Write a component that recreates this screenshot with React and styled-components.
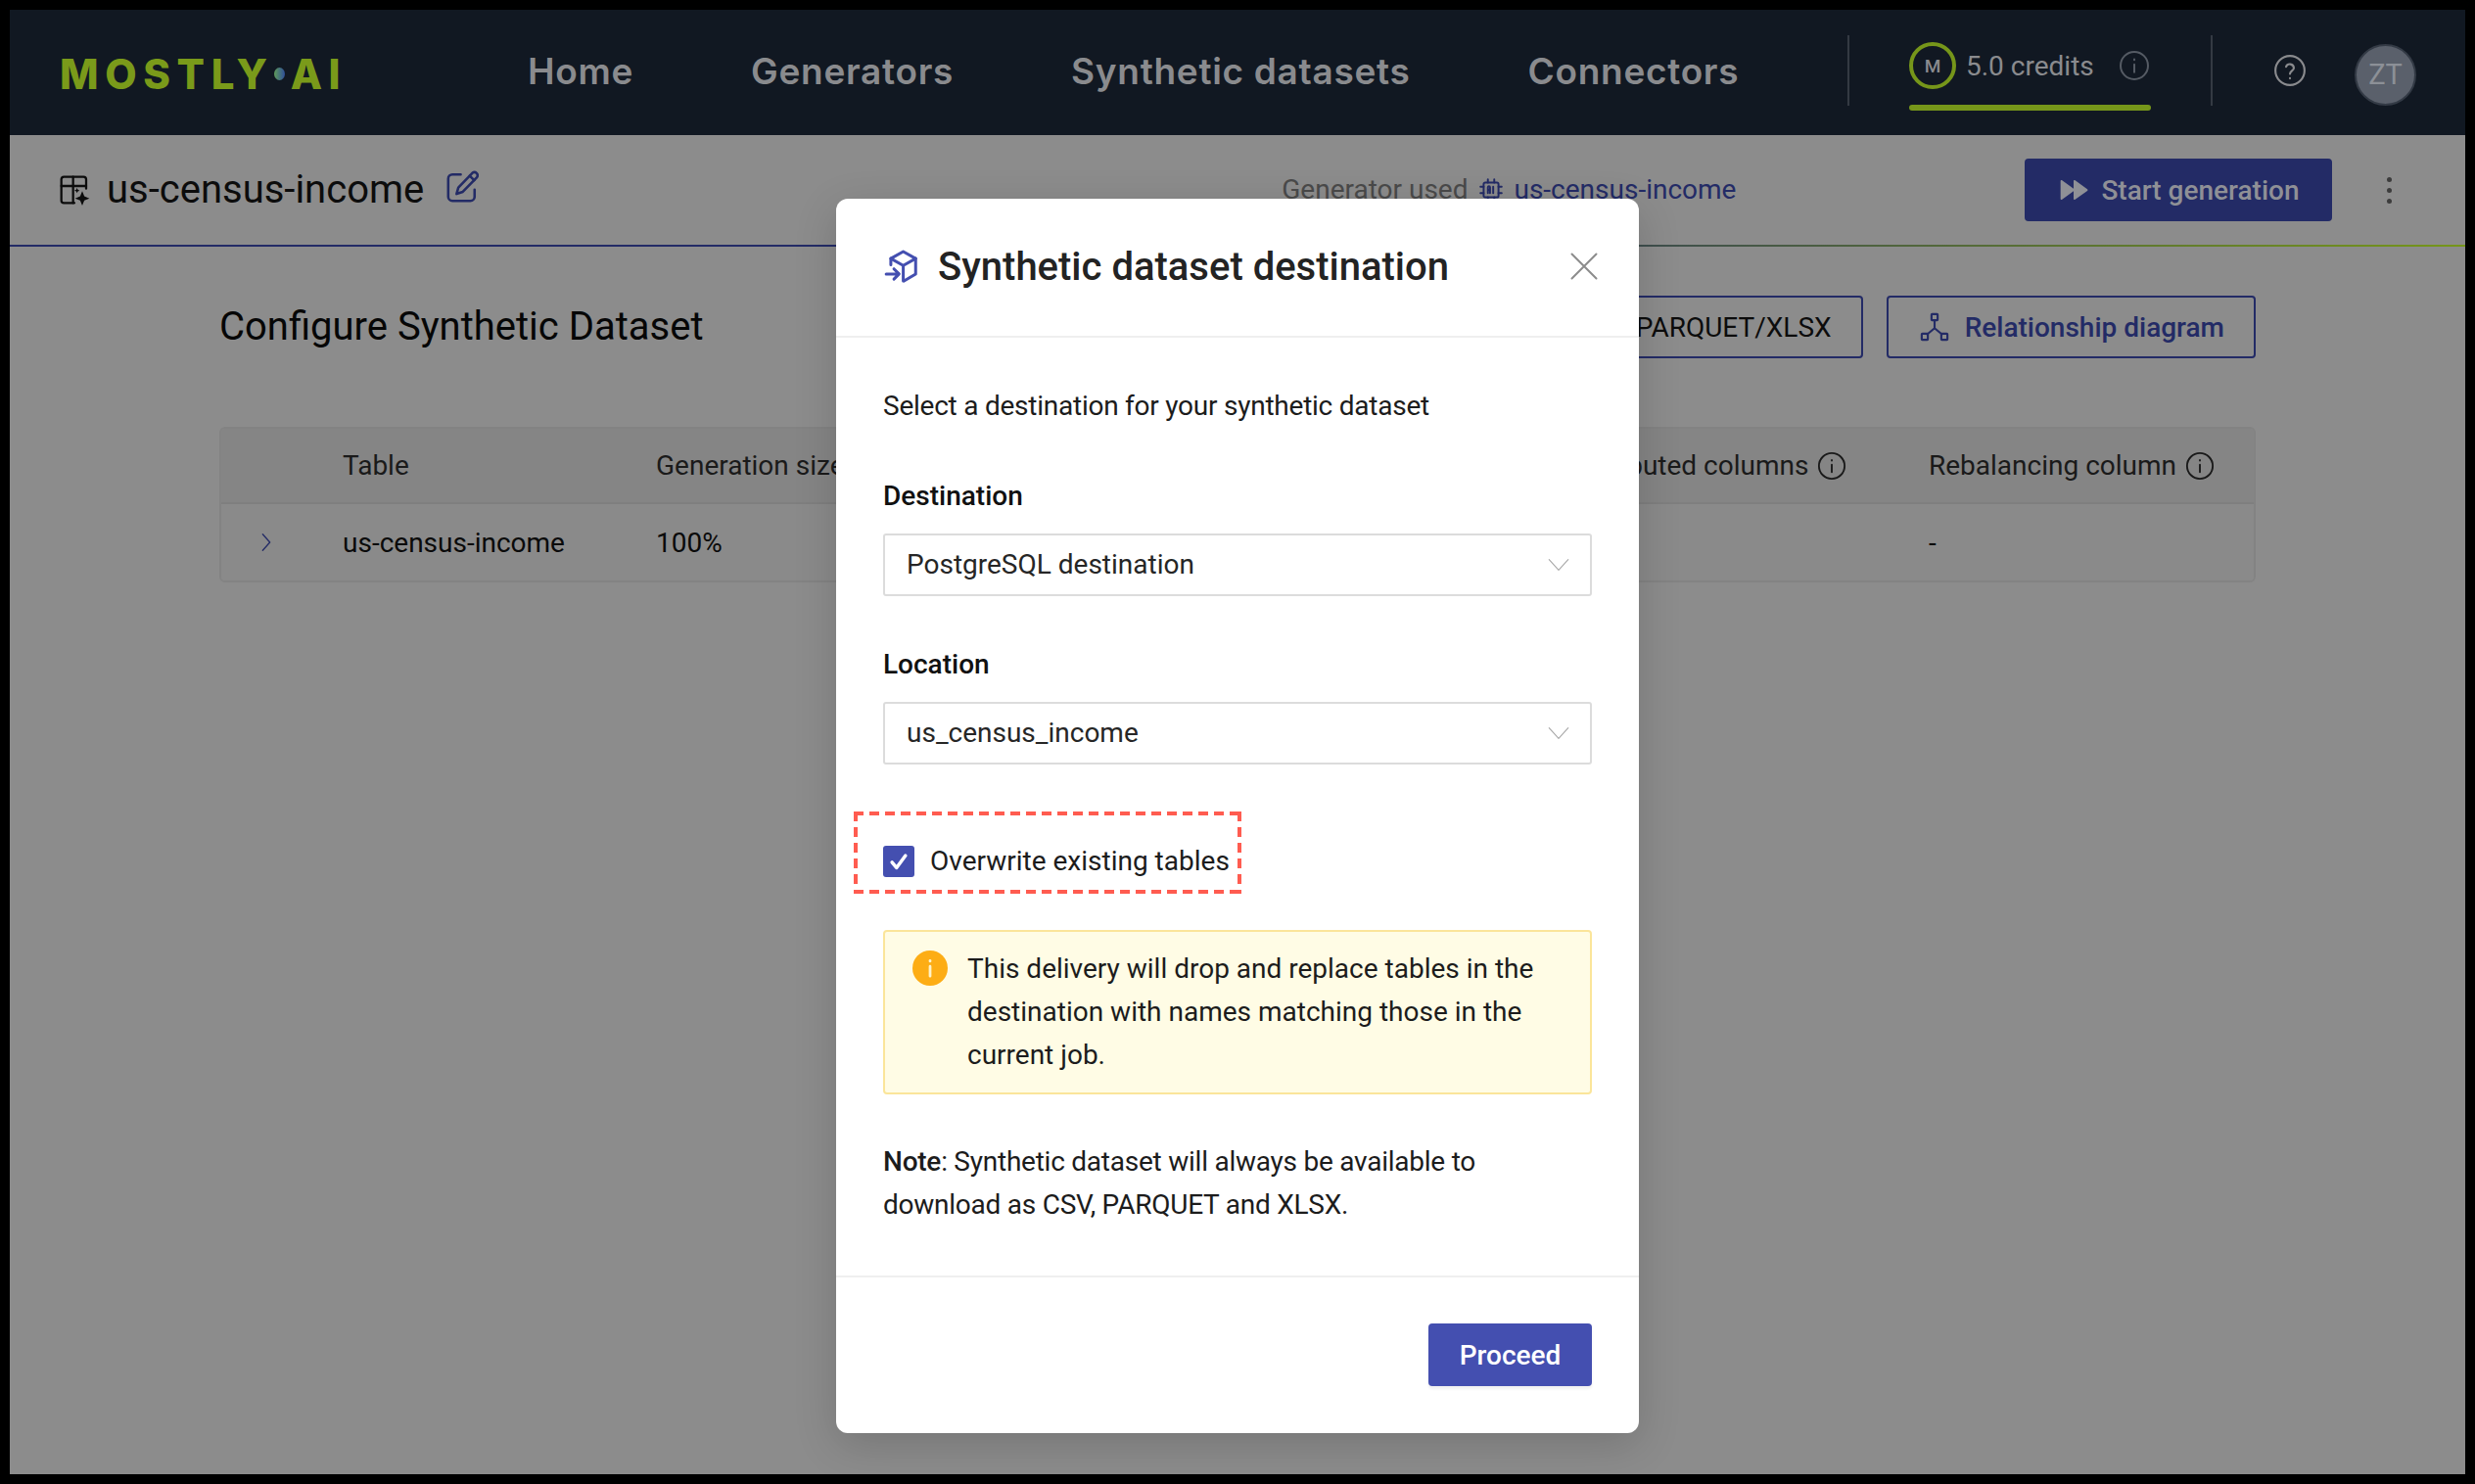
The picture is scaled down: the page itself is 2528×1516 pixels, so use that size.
import React from "react";
import styled, { createGlobalStyle } from "styled-components";

const Global = createGlobalStyle`
  html, body { margin: 0; padding: 0; background: #000; }
  * { box-sizing: border-box; }
  body { font-family: Roboto, "Liberation Sans", sans-serif; }
`;

const Frame = styled.div`
  position: relative;
  width: 2528px;
  height: 1516px;
  border: 10px solid #000;
  background: #8c8c8c;
  overflow: hidden;
`;

const Nav = styled.header`
  height: 128px;
  background: #111822;
  display: flex;
  align-items: center;
  padding: 0 50px 0 52px;
`;

const Logo = styled.div`
  width: 296px;
  margin: 3px 0 0 -1px;
  display: flex;
  align-items: center;
  font-family: Inter, sans-serif;
  font-size: 42px;
  font-weight: 800;
  letter-spacing: 6.6px;
  line-height: 1;
  white-space: nowrap;
  color: #7a9a1a;
`;

const LogoDot = styled.span`
  width: 11px;
  height: 13px;
  margin: 0 6px 0 0;
  flex: none;
  border-radius: 50%;
  background: linear-gradient(90deg, #5f9a5a, #2f4f9a);
`;

const NavLinks = styled.nav`
  display: flex;
  gap: 120px;
  margin-left: 182px;
  margin-top: -4px;
`;

const NavLink = styled.a`
  font-family: Inter, sans-serif;
  font-size: 37px;
  font-weight: 600;
  letter-spacing: 0.7px;
  color: #8a8b8e;
`;

const NavRight = styled.div`
  margin-left: auto;
  display: flex;
  align-items: center;
`;

const VDivider = styled.div`
  width: 2px;
  height: 72px;
  margin-top: -4px;
  background: #343a43;
`;

const Credits = styled.div`
  width: 247px;
  margin: 8px 61px 0;
  display: flex;
  flex-direction: column;
  gap: 16px;
`;

const CreditRow = styled.div`
  display: flex;
  align-items: center;
  color: #8a8b8e;
  font-size: 28px;
  white-space: nowrap;
`;

const CreditBadge = styled.div`
  width: 48px;
  height: 48px;
  border-radius: 50%;
  border: 4px solid #76961a;
  display: flex;
  align-items: center;
  justify-content: center;
  margin-right: 10px;
  font-size: 19px;
  font-weight: 500;
  color: #8a8b8e;
  flex: none;
`;

const CreditInfo = styled.span`
  display: flex;
  margin-left: 25px;
  color: #555b64;
`;

const CreditBar = styled.div`
  height: 6px;
  border-radius: 3px;
  background: #76961a;
`;

const HelpButton = styled.span`
  display: flex;
  margin: -4px 49px 0 62px;
  color: #8a8b8e;
`;

const Avatar = styled.div`
  width: 63px;
  height: 63px;
  margin-top: 4px;
  border-radius: 50%;
  background: #5a606b;
  border: 2px solid #333a45;
  color: #8c9097;
  font-size: 29px;
  display: flex;
  align-items: center;
  justify-content: center;
`;

const SubHeader = styled.div`
  height: 114px;
  padding: 0 0 0 50px;
  display: flex;
  align-items: center;
  border-bottom: 2px solid;
  border-image: linear-gradient(90deg, #232b66, #232b66 50%, #76961a) 1;
`;

const TitleIcon = styled.span`
  display: flex;
  color: #0c0c0c;
  margin-right: 17px;
`;

const ResourceTitle = styled.h1`
  margin: 0;
  font-size: 40px;
  line-height: 1;
  font-weight: 400;
  color: #0c0c0c;
  white-space: nowrap;
`;

const EditIcon = styled.span`
  display: flex;
  margin: -6px 0 0 22px;
  color: #232b66;
`;

const GeneratorUsed = styled.div`
  margin-left: 820px;
  margin-top: -1px;
  display: flex;
  align-items: center;
  font-size: 28px;
  color: #4a4a4a;
  white-space: nowrap;
  flex: none;
`;

const GeneratorLink = styled.span`
  display: flex;
  align-items: center;
  gap: 10px;
  margin-left: 11px;
  color: #232b66;
`;

const PrimaryDim = styled.button`
  margin-left: 295px;
  width: 314px;
  height: 64px;
  flex: none;
  border: 0;
  border-radius: 4px;
  background: #232b66;
  color: #8f9096;
  font: 500 28px Roboto, sans-serif;
  display: flex;
  align-items: center;
  justify-content: center;
  gap: 12px;
`;

const MoreDots = styled.span`
  margin-left: 56px;
  display: flex;
  flex-direction: column;
  gap: 6px;
`;

const Dot = styled.i`
  width: 5px;
  height: 5px;
  border-radius: 50%;
  background: #3c3c3c;
`;

const Content = styled.main`
  padding: 50px 214px 0;
`;

const ContentHead = styled.div`
  display: flex;
  align-items: center;
  height: 64px;
`;

const PageTitle = styled.h2`
  margin: -2px auto 0 0;
  font-size: 40px;
  font-weight: 400;
  color: #060606;
`;

const OutlineButton = styled.button`
  height: 64px;
  margin-left: 24px;
  padding: ${(p) => (p.$plain ? "0 30px" : "0 30px 0 32px")};
  border: 2px solid #232b66;
  border-radius: 4px;
  background: transparent;
  color: ${(p) => (p.$plain ? "#0c0c0c" : "#232b66")};
  font: ${(p) => (p.$plain ? 400 : 500)} 28px Roboto, sans-serif;
  display: flex;
  align-items: center;
  gap: 16px;
`;

const Table = styled.div`
  margin-top: 70px;
  border: 2px solid #838383;
  border-radius: 6px;
  overflow: hidden;
`;

const Row = styled.div`
  display: grid;
  grid-template-columns: 124px 320px 960px 340px 1fr;
  align-items: center;
  height: ${(p) => (p.$head ? "77px" : "78px")};
  background: ${(p) => (p.$head ? "#858585" : "#8a8a8a")};
  border-bottom: ${(p) => (p.$head ? "2px solid #7f7f7f" : "0")};
  font-size: 28px;
  color: ${(p) => (p.$head ? "#1a1a1a" : "#0a0a0a")};
`;

const Cell = styled.div`
  display: flex;
  align-items: center;
  gap: 9px;
  white-space: nowrap;
`;

const ExpandCell = styled(Cell)`
  padding-left: 35px;
  color: #232b66;
`;

const Modal = styled.section`
  position: absolute;
  left: 844px;
  top: 193px;
  width: 820px;
  height: 1261px;
  background: #fff;
  border-radius: 12px;
  box-shadow: 0 12px 44px rgba(0, 0, 0, 0.16);
  display: flex;
  flex-direction: column;
`;

const ModalHeader = styled.div`
  height: 142px;
  padding: 0 41px 2px 48px;
  display: flex;
  align-items: center;
  border-bottom: 2px solid #efefef;
`;

const ModalIcon = styled.span`
  display: flex;
  color: #444fb0;
  margin-right: 18px;
`;

const ModalTitle = styled.h3`
  margin: 0 auto 0 0;
  font-size: 40px;
  font-weight: 500;
  color: #232323;
`;

const CloseIcon = styled.span`
  display: flex;
  color: #8c8c8c;
`;

const ModalBody = styled.div`
  flex: 1;
  padding: 48px 48px 0;
  font-size: 28px;
  line-height: 44px;
  color: #1c1c1c;
`;

const Intro = styled.p`
  margin: 0;
  letter-spacing: -0.24px;
`;

const Label = styled.div`
  margin-top: 48px;
  font-weight: 500;
  color: #111;
`;

const SelectBox = styled.div`
  height: 64px;
  margin-top: 16px;
  padding: 0 22px;
  border: 2px solid #dcdcdc;
  border-radius: 3px;
  display: flex;
  align-items: center;
  justify-content: space-between;
  color: #262626;
`;

const Chevron = styled.span`
  display: flex;
  margin-right: -3px;
  color: #a6a6a6;
`;

const Highlight = styled.div`
  display: flex;
  align-items: center;
  width: 396px;
  height: 84px;
  margin: 48px 0 0 -30px;
  padding: 18px 0 0 30px;
  white-space: nowrap;
  background-image:
    linear-gradient(90deg, #ff5c50 10px, transparent 10px),
    linear-gradient(90deg, #ff5c50 10px, transparent 10px),
    linear-gradient(180deg, #ff5c50 10px, transparent 10px),
    linear-gradient(180deg, #ff5c50 10px, transparent 10px);
  background-repeat: repeat-x, repeat-x, repeat-y, repeat-y;
  background-size: 16px 4px, 16px 4px, 4px 16px, 4px 16px;
  background-position: top left, bottom left, top left, top right;
`;

const CheckBox = styled.span`
  width: 32px;
  height: 32px;
  margin-right: 16px;
  border-radius: 3px;
  background: #444fb0;
  color: #fff;
  display: flex;
  align-items: center;
  justify-content: center;
  flex: none;
`;

const Alert = styled.div`
  height: 168px;
  margin-top: 37px;
  padding: 16px 30px 0 28px;
  background: #fffce5;
  border: 2px solid #fbe59a;
  border-radius: 4px;
  display: flex;
  gap: 20px;
`;

const AlertIcon = styled.span`
  width: 36px;
  height: 36px;
  margin-top: 3px;
  border-radius: 50%;
  background: #fdad15;
  color: #fff3c9;
  display: flex;
  align-items: center;
  justify-content: center;
  flex: none;
`;

const Note = styled.p`
  margin: 47px 0 0;
  letter-spacing: -0.24px;
`;

const NoteLead = styled.b`
  font-weight: 500;
`;

const ModalFooter = styled.div`
  height: 161px;
  padding: 47px 48px 0;
  border-top: 2px solid #efefef;
  display: flex;
  justify-content: flex-end;
  align-items: flex-start;
`;

const ProceedButton = styled.button`
  width: 167px;
  height: 64px;
  border: 0;
  border-radius: 4px;
  background: #444fb0;
  color: #fff;
  font: 500 28px Roboto, sans-serif;
  box-shadow: 0 3px 3px rgba(0, 0, 0, 0.06);
`;

const Svg = ({ size = 32, sw = 2, fill = "none", children, vb = 24 }) => (
  <svg width={size} height={size} viewBox={`0 0 ${vb} ${vb}`} fill={fill} stroke={fill === "none" ? "currentColor" : "none"} strokeWidth={sw} strokeLinecap="round" strokeLinejoin="round">
    {children}
  </svg>
);

const InfoIcon = ({ size = 32, sw = 1.5 }) => (
  <Svg size={size} sw={sw}>
    <circle cx="12" cy="12" r="10.5" />
    <path d="M12 11v6" />
    <path d="M12 7.2v.4" />
  </Svg>
);

const TableSparkIcon = () => (
  <Svg size={32} sw={1.7}>
    <path d="M12 22H4a2 2 0 0 1-2-2V4a2 2 0 0 1 2-2h15a2 2 0 0 1 2 2v7" />
    <path d="M2 9h19M11 2v20" />
    <path fill="currentColor" stroke="none" d="M18 13l1.6 3.9 3.9 1.6-3.9 1.6L18 24l-1.6-3.9-3.9-1.6 3.9-1.6z" />
    <path fill="currentColor" stroke="none" d="M14 10.5l.6 1.4 1.4.6-1.4.6-.6 1.4-.6-1.4-1.4-.6 1.4-.6z" />
  </Svg>
);

const EditGlyph = () => (
  <Svg size={34} sw={1.8}>
    <path d="M11 3H5a3 3 0 0 0-3 3v13a3 3 0 0 0 3 3h13a3 3 0 0 0 3-3v-5" />
    <path d="M19.5 1.8a2.3 2.3 0 0 1 3.2 3.2L12.5 15.5 8 17l1.3-4.6z" />
    <path d="M17.5 4l3.2 3.2" />
  </Svg>
);

const Cpu = () => (
  <Svg size={26} sw={1.8}>
    <rect x="5" y="5" width="14" height="14" rx="1.5" />
    <path d="M9 15V9.5a1 1 0 0 1 2 0V15M9 12h2M14 9v6M9 2v3M15 2v3M9 19v3M15 19v3M2 9h3M2 15h3M19 9h3M19 15h3" />
  </Svg>
);

const FastForward = () => (
  <Svg size={32} fill="currentColor">
    <path d="M2 5.2c0-.6.7-1 1.2-.6L12 11V5.2c0-.6.7-1 1.2-.6l9.3 6.8c.5.3.5 1 0 1.3l-9.3 6.7c-.5.4-1.2 0-1.2-.6V13l-8.8 6.4c-.5.4-1.2 0-1.2-.6z" />
  </Svg>
);

const Diagram = () => (
  <Svg size={30} sw={1.7}>
    <rect x="9.5" y="1.5" width="5" height="5" rx=".5" />
    <rect x="1.5" y="17.5" width="5" height="5" rx=".5" />
    <rect x="17.5" y="17.5" width="5" height="5" rx=".5" />
    <path d="M12 6.5V13M12 13l-6 5M12 13l6 5" />
  </Svg>
);

const BoxIcon = () => (
  <Svg size={38} sw={1.9}>
    <path d="M5 11V7l8-4.500L21 7v10l-7.500 4.500" />
    <path d="M5 7l8 4.500L21 7M13 11.500V21.500" />
    <path d="M2 17h8M7 13.700L10.300 17 7 20.300" />
  </Svg>
);

const ChevronDownIcon = () => (
  <Svg size={26} sw={1}>
    <path d="M3 7l9 10 9-10" />
  </Svg>
);

const ChevronRightIcon = () => (
  <Svg size={22} sw={1.4}>
    <path d="M8 3l8 9-8 9" />
  </Svg>
);

const HelpIcon = () => (
  <Svg size={34} sw={1.5}>
    <circle cx="12" cy="12" r="10.5" />
    <path d="M9.2 9.3a2.9 2.9 0 0 1 5.6.9c0 1.9-2.800 2.300-2.800 4.200" />
    <path d="M12 17.600v.1" />
  </Svg>
);

const CloseGlyph = () => (
  <Svg size={30} sw={1.6}>
    <path d="M2 2l20 20M22 2L2 22" />
  </Svg>
);

const CheckGlyph = () => (
  <Svg size={22} sw={3.8}>
    <path d="M4.500 13l5 6L19.500 5.500" />
  </Svg>
);

const AlertGlyph = () => (
  <Svg size={30} sw={2.2}>
    <path d="M12 10.500v8M12 5.800v.5" />
  </Svg>
);

export default function App() {
  return (
    <>
      <Global />
      <Frame>
        <Nav>
          <Logo>
            MOSTLY<LogoDot />AI
          </Logo>
          <NavLinks>
            <NavLink>Home</NavLink>
            <NavLink>Generators</NavLink>
            <NavLink>Synthetic datasets</NavLink>
            <NavLink>Connectors</NavLink>
          </NavLinks>
          <NavRight>
            <VDivider />
            <Credits>
              <CreditRow>
                <CreditBadge>M</CreditBadge>
                5.0 credits
                <CreditInfo>
                  <InfoIcon />
                </CreditInfo>
              </CreditRow>
              <CreditBar />
            </Credits>
            <VDivider />
            <HelpButton>
              <HelpIcon />
            </HelpButton>
            <Avatar>ZT</Avatar>
          </NavRight>
        </Nav>
        <SubHeader>
          <TitleIcon>
            <TableSparkIcon />
          </TitleIcon>
          <ResourceTitle>us-census-income</ResourceTitle>
          <EditIcon>
            <EditGlyph />
          </EditIcon>
          <GeneratorUsed>
            Generator used
            <GeneratorLink>
              <Cpu />
              us-census-income
            </GeneratorLink>
          </GeneratorUsed>
          <PrimaryDim>
            <FastForward />
            Start generation
          </PrimaryDim>
          <MoreDots>
            <Dot />
            <Dot />
            <Dot />
          </MoreDots>
        </SubHeader>
        <Content>
          <ContentHead>
            <PageTitle>Configure Synthetic Dataset</PageTitle>
            <OutlineButton $plain>CSV/PARQUET/XLSX</OutlineButton>
            <OutlineButton>
              <Diagram />
              Relationship diagram
            </OutlineButton>
          </ContentHead>
          <Table>
            <Row $head>
              <Cell />
              <Cell>Table</Cell>
              <Cell>Generation size</Cell>
              <Cell>
                Imputed columns
                <InfoIcon size={30} />
              </Cell>
              <Cell>
                Rebalancing column
                <InfoIcon size={30} />
              </Cell>
            </Row>
            <Row>
              <ExpandCell>
                <ChevronRightIcon />
              </ExpandCell>
              <Cell>us-census-income</Cell>
              <Cell>100%</Cell>
              <Cell>-</Cell>
              <Cell>-</Cell>
            </Row>
          </Table>
        </Content>
        <Modal>
          <ModalHeader>
            <ModalIcon>
              <BoxIcon />
            </ModalIcon>
            <ModalTitle>Synthetic dataset destination</ModalTitle>
            <CloseIcon>
              <CloseGlyph />
            </CloseIcon>
          </ModalHeader>
          <ModalBody>
            <Intro>Select a destination for your synthetic dataset</Intro>
            <Label>Destination</Label>
            <SelectBox>
              PostgreSQL destination
              <Chevron>
                <ChevronDownIcon />
              </Chevron>
            </SelectBox>
            <Label>Location</Label>
            <SelectBox>
              us_census_income
              <Chevron>
                <ChevronDownIcon />
              </Chevron>
            </SelectBox>
            <Highlight>
              <CheckBox>
                <CheckGlyph />
              </CheckBox>
              Overwrite existing tables
            </Highlight>
            <Alert>
              <AlertIcon>
                <AlertGlyph />
              </AlertIcon>
              <span>
                This delivery will drop and replace tables in the destination with names matching those in the current job.
              </span>
            </Alert>
            <Note>
              <NoteLead>Note</NoteLead>: Synthetic dataset will always be available to download as CSV, PARQUET and XLSX.
            </Note>
          </ModalBody>
          <ModalFooter>
            <ProceedButton>Proceed</ProceedButton>
          </ModalFooter>
        </Modal>
      </Frame>
    </>
  );
}
